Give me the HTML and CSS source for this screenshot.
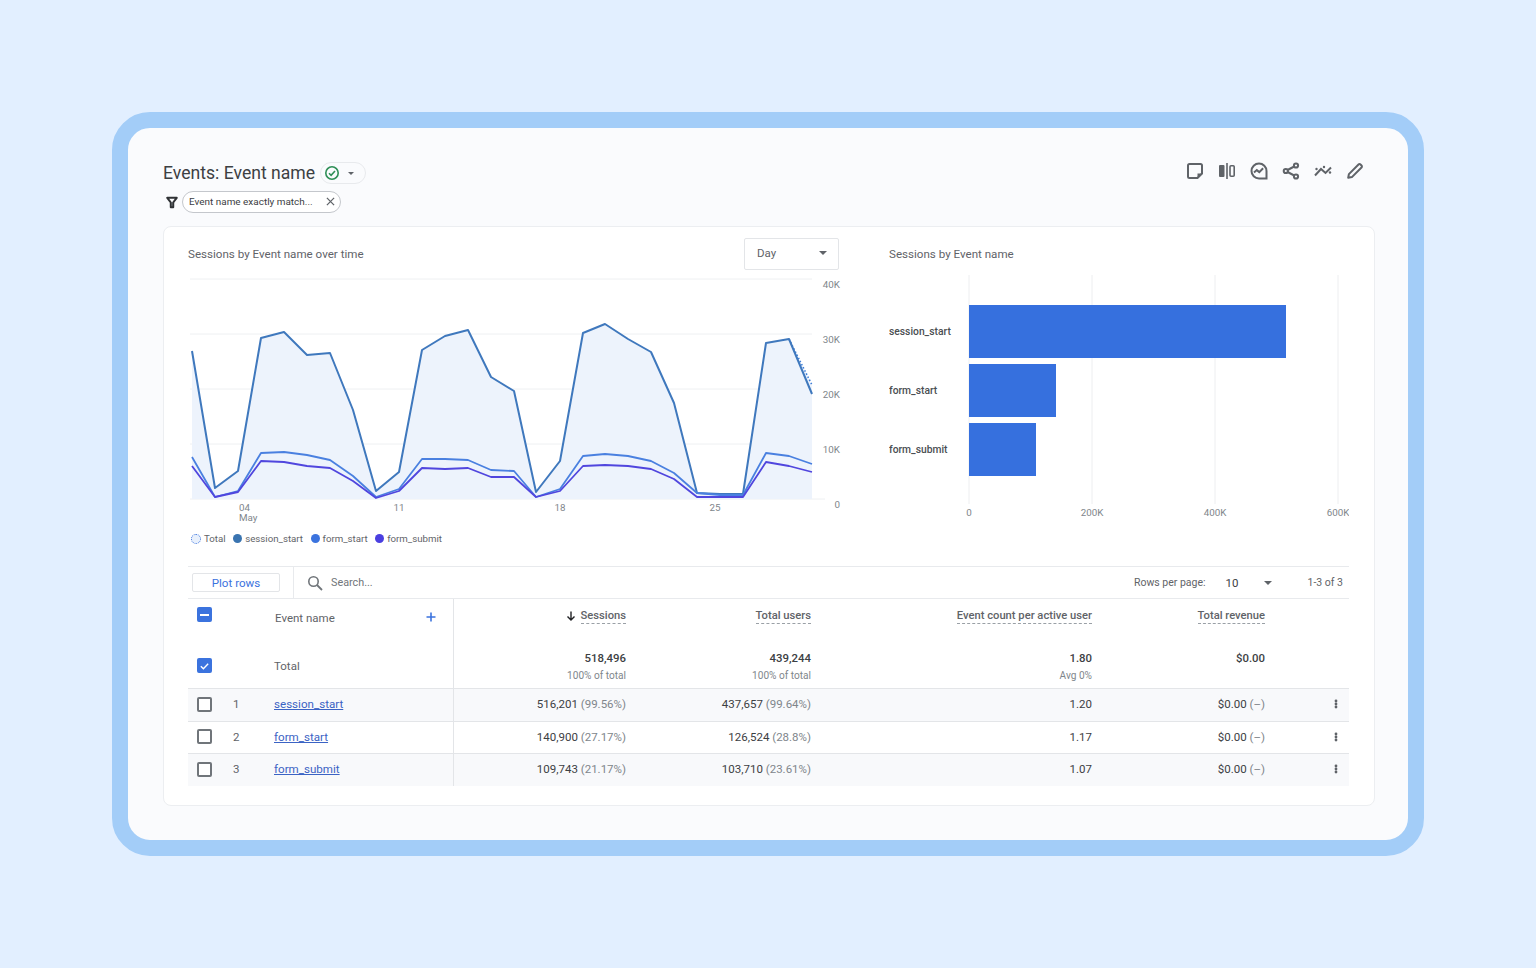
FILE: index.html
```html
<!DOCTYPE html>
<html lang="en">
<head>
<meta charset="utf-8">
<title>Events: Event name</title>
<link rel="stylesheet" href="styles.css">
</head>
<body>
<main class="frame">
  <header class="head">
    <div class="head-left">
      <div class="title-row">
        <h1 class="title">Events: Event name</h1>
        <div class="status">
          <svg class="status-icon" viewBox="0 0 16 16"><circle cx="8" cy="8" r="6.200" fill="none" stroke="#2f8f57" stroke-width="1.600"/><path d="M5 8.200l2.100 2.100L11 6" fill="none" stroke="#2f8f57" stroke-width="1.600"/></svg>
          <span class="caret caret-s"></span>
        </div>
      </div>
      <div class="filter-row">
        <svg class="funnel" viewBox="0 0 14 14"><path d="M1.500 1.500h11L8.400 7v5.500H5.600V7z" fill="none" stroke="#2f3235" stroke-width="2.400" stroke-linejoin="round"/></svg>
        <div class="filter-chip">
          <span>Event name exactly match...</span>
          <svg class="chip-x" viewBox="0 0 10 10"><path d="M1 1l8 8M9 1l-8 8" stroke="#5f6368" stroke-width="1.400" fill="none"/></svg>
        </div>
      </div>
    </div>
    <div class="tools">
      <svg class="tool" viewBox="0 0 18 18"><path d="M3.500 2h11A1.500 1.500 0 0 1 16 3.500V11.500L11.500 16h-8A1.500 1.500 0 0 1 2 14.500v-11A1.500 1.500 0 0 1 3.500 2z" fill="none" stroke="#5f6368" stroke-width="2"/><path d="M11.500 16v-4.500H16z" fill="#5f6368"/></svg>
      <svg class="tool" viewBox="0 0 18 18"><rect x="1" y="3" width="5.500" height="12" rx="1" fill="#5f6368"/><path d="M9 1v16" stroke="#5f6368" stroke-width="1.600"/><rect x="12" y="3.700" width="4.200" height="10.600" rx="1" fill="none" stroke="#5f6368" stroke-width="1.600"/></svg>
      <svg class="tool" viewBox="0 0 18 18"><path d="M9 1.500a7.500 7.500 0 1 0 0 15h7.500V9A7.500 7.500 0 0 0 9 1.500z" fill="none" stroke="#5f6368" stroke-width="2"/><path d="M4 10.500l2.800-2.400 2.500 2 3.800-3.800" fill="none" stroke="#5f6368" stroke-width="2"/></svg>
      <svg class="tool" viewBox="0 0 18 18"><circle cx="14" cy="3.500" r="2.100" fill="none" stroke="#5f6368" stroke-width="2"/><circle cx="3.800" cy="9" r="2.100" fill="none" stroke="#5f6368" stroke-width="2"/><circle cx="14" cy="14.500" r="2.100" fill="none" stroke="#5f6368" stroke-width="2"/><path d="M5.600 8l6.600-3.500M5.600 10l6.600 3.500" stroke="#5f6368" stroke-width="2" fill="none"/></svg>
      <svg class="tool" viewBox="0 0 18 18"><path d="M1 13.500l6-6.500 4.500 4L17 5.500" fill="none" stroke="#5f6368" stroke-width="2"/><circle cx="2.500" cy="7" r="1.200" fill="#5f6368"/><circle cx="10" cy="5" r="1.200" fill="#5f6368"/><circle cx="16" cy="10.500" r="1.200" fill="#5f6368"/></svg>
      <svg class="tool" viewBox="0 0 18 18"><path d="M2.200 15.800l.7-3.700L12.500 2.500a1.400 1.400 0 0 1 2 0l1 1a1.400 1.400 0 0 1 0 2L5.900 15.100z" fill="none" stroke="#5f6368" stroke-width="2" stroke-linejoin="round"/></svg>
    </div>
  </header>

  <section class="card">
    <div class="charts">
      <div class="chart-left">
        <div class="chart-head">
          <h2 class="chart-title">Sessions by Event name over time</h2>
          <div class="day-select"><span>Day</span><span class="caret"></span></div>
        </div>
        <svg class="chart-svg" viewBox="188 275 660 250">
          <g stroke="#eef0f2" stroke-width="1">
            <path d="M190 279H812M190 334H812M190 389H812M190 444H812M190 499H825"/>
          </g>
          <polygon fill="#edf3fc" points="192,351 215,488 238,471 261,338 284,332 307,355 330,353 353,410 376,491 399,472 422,350 445,336 468,330 491,377 514,391 536,492 560,461 583,333 605,324 628,339 651,352 674,403 697,493 720,494 743,494 766,343 789,339 812,385 812,499 192,499"/>
          <polyline fill="none" stroke="#3f7fd8" stroke-width="1.600" stroke-dasharray="1.500 2" points="789,339 812,385"/>
          <polyline fill="none" stroke="#3f78bd" stroke-width="2" stroke-linejoin="round" points="192,351 215,488 238,471 261,338 284,332 307,355 330,353 353,410 376,491 399,472 422,350 445,336 468,330 491,377 514,391 536,492 560,461 583,333 605,324 628,339 651,352 674,403 697,493 720,494 743,494 766,343 789,339 812,394"/>
          <polyline fill="none" stroke="#4a80e0" stroke-width="1.800" stroke-linejoin="round" points="192,457 215,497 238,491 261,453 284,452 307,455 330,460 353,476 376,497 399,489 422,459 445,459 468,460 491,470 514,471 536,497 560,489 583,456 605,454 628,456 651,461 674,473 697,493 720,495 743,495 766,453 789,456 812,464"/>
          <polyline fill="none" stroke="#5046de" stroke-width="1.800" stroke-linejoin="round" points="192,466 215,497 238,492 261,461 284,462 307,466 330,468 353,481 376,498 399,491 422,468 445,469 468,468 491,477 514,477 536,497 560,491 583,466 605,465 628,466 651,469 674,479 697,497 720,497 743,497 766,462 789,466 812,472"/>
          <g class="axis">
            <text x="840" y="288" text-anchor="end">40K</text>
            <text x="840" y="343" text-anchor="end">30K</text>
            <text x="840" y="398" text-anchor="end">20K</text>
            <text x="840" y="453" text-anchor="end">10K</text>
            <text x="840" y="508" text-anchor="end">0</text>
            <text x="239" y="511">04</text>
            <text x="239" y="521">May</text>
            <text x="399" y="511" text-anchor="middle">11</text>
            <text x="560" y="511" text-anchor="middle">18</text>
            <text x="715" y="511" text-anchor="middle">25</text>
          </g>
        </svg>
        <ul class="legend">
          <li class="legend-item"><span class="dot dot-total"></span>Total</li>
          <li class="legend-item"><span class="dot dot-session"></span>session_start</li>
          <li class="legend-item"><span class="dot dot-start"></span>form_start</li>
          <li class="legend-item"><span class="dot dot-submit"></span>form_submit</li>
        </ul>
      </div>
      <div class="chart-right">
        <h2 class="chart-title chart-title-right">Sessions by Event name</h2>
        <svg class="bar-svg" viewBox="889 275 460 250">
          <path d="M969 275V504M1092 275V504M1215 275V504M1338 275V504" stroke="#edeef0" stroke-width="1"/>
          <rect x="969" y="305" width="317" height="53" fill="#3670de"/>
          <rect x="969" y="364" width="87" height="53" fill="#3670de"/>
          <rect x="969" y="423" width="67" height="53" fill="#3670de"/>
          <g class="bar-label">
            <text x="889" y="335">session_start</text>
            <text x="889" y="394">form_start</text>
            <text x="889" y="453">form_submit</text>
          </g>
          <g class="axis" text-anchor="middle">
            <text x="969" y="516">0</text>
            <text x="1092" y="516">200K</text>
            <text x="1215" y="516">400K</text>
            <text x="1338" y="516">600K</text>
          </g>
        </svg>
      </div>
    </div>

    <div class="report">
      <div class="toolbar">
        <button class="plot-btn">Plot rows</button>
        <div class="search">
          <svg class="search-icon" viewBox="0 0 16 16"><circle cx="6.500" cy="6.500" r="4.700" fill="none" stroke="#70757a" stroke-width="1.600"/><path d="M10 10l5 5" stroke="#70757a" stroke-width="1.800"/></svg>
          <span>Search...</span>
        </div>
        <div class="pager">
          <span>Rows per page:</span>
          <span class="pager-num">10</span>
          <span class="caret caret-s"></span>
          <span class="pager-range">1-3 of 3</span>
        </div>
      </div>

      <div class="row row-head">
        <div class="cell cell-check"><span class="box box-blue"><span class="minus"></span></span></div>
        <div class="cell"></div>
        <div class="cell cell-name">Event name<svg class="plus" viewBox="0 0 10 10"><path d="M5 .5v9M.5 5h9" stroke="#3b73de" stroke-width="1.600"/></svg></div>
        <div class="cell cell-num cell-div"><svg class="arrow" viewBox="0 0 10 10"><path d="M5 .5v8.500M1.500 5.500L5 9l3.500-3.500" fill="none" stroke="#202124" stroke-width="1.400"/></svg><span class="metric">Sessions</span></div>
        <div class="cell cell-num"><span class="metric">Total users</span></div>
        <div class="cell cell-num"><span class="metric">Event count per active user</span></div>
        <div class="cell cell-num"><span class="metric">Total revenue</span></div>
        <div class="cell"></div>
      </div>

      <div class="row row-total">
        <div class="cell cell-check"><span class="box box-blue"><svg class="tick" viewBox="0 0 12 12"><path d="M2 6.200l2.800 2.800L10 3.500" fill="none" stroke="#fff" stroke-width="1.500"/></svg></span></div>
        <div class="cell"></div>
        <div class="cell cell-name">Total</div>
        <div class="cell cell-num cell-div"><div class="total"><b>518,496</b><small>100% of total</small></div></div>
        <div class="cell cell-num"><div class="total"><b>439,244</b><small>100% of total</small></div></div>
        <div class="cell cell-num"><div class="total"><b>1.80</b><small>Avg 0%</small></div></div>
        <div class="cell cell-num"><div class="total"><b>$0.00</b></div></div>
        <div class="cell"></div>
      </div>

      <div class="row row-data row-tint">
        <div class="cell cell-check"><span class="box"></span></div>
        <div class="cell cell-idx">1</div>
        <div class="cell cell-name"><a class="link" href="#">session_start</a></div>
        <div class="cell cell-num cell-div">516,201<span class="pct">&nbsp;(99.56%)</span></div>
        <div class="cell cell-num">437,657<span class="pct">&nbsp;(99.64%)</span></div>
        <div class="cell cell-num">1.20</div>
        <div class="cell cell-num">$0.00<span class="pct">&nbsp;(–)</span></div>
        <div class="cell cell-more"><span class="more"><i></i><i></i><i></i></span></div>
      </div>
      <div class="row row-data">
        <div class="cell cell-check"><span class="box"></span></div>
        <div class="cell cell-idx">2</div>
        <div class="cell cell-name"><a class="link" href="#">form_start</a></div>
        <div class="cell cell-num cell-div">140,900<span class="pct">&nbsp;(27.17%)</span></div>
        <div class="cell cell-num">126,524<span class="pct">&nbsp;(28.8%)</span></div>
        <div class="cell cell-num">1.17</div>
        <div class="cell cell-num">$0.00<span class="pct">&nbsp;(–)</span></div>
        <div class="cell cell-more"><span class="more"><i></i><i></i><i></i></span></div>
      </div>
      <div class="row row-data row-tint row-last">
        <div class="cell cell-check"><span class="box"></span></div>
        <div class="cell cell-idx">3</div>
        <div class="cell cell-name"><a class="link" href="#">form_submit</a></div>
        <div class="cell cell-num cell-div">109,743<span class="pct">&nbsp;(21.17%)</span></div>
        <div class="cell cell-num">103,710<span class="pct">&nbsp;(23.61%)</span></div>
        <div class="cell cell-num">1.07</div>
        <div class="cell cell-num">$0.00<span class="pct">&nbsp;(–)</span></div>
        <div class="cell cell-more"><span class="more"><i></i><i></i><i></i></span></div>
      </div>
    </div>
  </section>
</main>
</body>
</html>
```

FILE: styles.css
```css
* { box-sizing: border-box; }
html, body { margin: 0; height: 100%; }
body {
  background: #e2efff;
  font-family: Roboto, "Liberation Sans", sans-serif;
  color: #3c4043;
  padding: 112px;
  overflow: hidden;
}
h1, h2, ul { margin: 0; padding: 0; font-weight: 400; }
ul { list-style: none; }

.frame {
  width: 1312px;
  height: 744px;
  border: 16px solid #a3cdf8;
  border-radius: 38px;
  background: #fafbfd;
  padding: 33px 33px 34px 35px;
  display: flex;
  flex-direction: column;
}

.head { display: flex; justify-content: space-between; align-items: flex-start; height: 65px; }
.title-row { display: flex; align-items: center; height: 24px; gap: 5px; }
.title { font-size: 17.6px; line-height: 24px; color: #3c4043; }
.status {
  width: 46px; height: 22px;
  border: 1px solid #e8eaed; border-radius: 11px;
  display: flex; align-items: center; padding-left: 3px; gap: 8px;
}
.status-icon { width: 16px; height: 16px; }
.caret { width: 0; height: 0; border-left: 4px solid transparent; border-right: 4px solid transparent; border-top: 4px solid #5f6368; }
.status .caret { border-left-width: 3.500px; border-right-width: 3.500px; border-top-width: 3.500px; }

.filter-row { display: flex; align-items: center; margin-top: 6px; margin-left: 3px; gap: 4px; }
.funnel { width: 12px; height: 13px; }
.filter-chip {
  width: 159px; height: 22px;
  border: 1px solid #c4c7cc; border-radius: 11px; background: #fff;
  display: flex; align-items: center; justify-content: space-between;
  padding: 0 5px 1px 6px;
  font-size: 9.950px; color: #3c4043;
  white-space: nowrap;
}
.chip-x { width: 9px; height: 9px; }

.tools { display: flex; gap: 14px; padding: 1px 11px 0 0; }
.tool { width: 18px; height: 18px; display: block; }

.card {
  flex: 1;
  background: #fff;
  border: 1px solid #eceef1;
  border-radius: 8px;
  padding: 11px 25px 0 24px;
}
.charts { display: grid; grid-template-columns: 660px 1fr; column-gap: 41px; }
.chart-head { display: flex; justify-content: space-between; align-items: flex-start; height: 31px; margin-bottom: 6px; padding-right: 9px; }
.chart-title { font-size: 11.600px; line-height: 33px; color: #5f6368; }
.chart-head .chart-title { height: 31px; }
.chart-title-right { height: 31px; margin-bottom: 6px; }
.day-select {
  width: 95px; height: 32px;
  border: 1px solid #e3e5e8; border-radius: 2px;
  display: flex; align-items: center; justify-content: space-between;
  padding: 0 11px 2px 12px;
  font-size: 11.500px; color: #5f6368;
}
.chart-svg, .bar-svg { display: block; width: 660px; height: 250px; }
.bar-svg { width: 460px; }
.axis { font-size: 9.800px; fill: #80868b; font-family: Roboto, "Liberation Sans", sans-serif; }
.bar-label { font-size: 10.300px; font-weight: 500; fill: #4a4e52; font-family: Roboto, "Liberation Sans", sans-serif; }

.legend { display: flex; align-items: center; height: 13px; margin: 7px 0 1px 3px; font-size: 9.700px; color: #5f6368; gap: 7.500px; }
.legend-item { display: flex; align-items: center; gap: 3px; }
.dot { width: 9px; height: 9px; border-radius: 50%; display: block; }
.dot-total { width: 10px; height: 10px; background: #e8f0fc; border: 1.500px dotted #3b73de; }
.dot-session { background: #3a74b0; }
.dot-start { background: #3b73de; }
.dot-submit { background: #4a3fe0; }

.report { margin-top: 20px; }
.toolbar {
  display: flex; align-items: center;
  height: 33px;
  border-top: 1px solid #e8eaed; border-bottom: 1px solid #e8eaed;
  padding: 0 6px 0 4px;
  font-size: 10.500px; color: #5f6368;
}
.plot-btn {
  width: 88px; height: 19px; padding: 0;
  background: #fff; border: 1px solid #e3e5e8; border-radius: 2px;
  color: #3b73de; font: 400 11.600px Roboto, "Liberation Sans", sans-serif;
}
.search {
  display: flex; align-items: center; gap: 8px;
  height: 32px; margin-left: 13px; padding-left: 13px;
  border-left: 1px solid #e8eaed;
  font-size: 10.800px; color: #70757a;
}
.search-icon { width: 16px; height: 16px; }
.pager { display: flex; align-items: center; margin-left: auto; }
.pager-num { margin-left: 20px; width: 38px; font-size: 11.500px; line-height: 12px; color: #3c4043; }
.pager-range { margin-left: 36px; }

.row {
  display: grid;
  grid-template-columns: 45px 41px 179px 173px 185px 281px 173px 84px;
  font-size: 11.500px;
  color: #5f6368;
}
.row-head { height: 42px; }
.row-total { height: 48px; border-bottom: 1px solid #e3e5e8; }
.row-data { height: 32.500px; border-bottom: 1px solid #e3e5e8; }
.row-last { height: 31.500px; border-bottom: 0; }
.row-tint { background: #f8f9fb; }

.cell { display: flex; align-items: center; min-width: 0; }
.row-data .cell { padding-bottom: 1px; }
.cell-check { padding-left: 9px; }
.cell-idx { color: #5f6368; }
.cell-name { justify-content: space-between; padding-right: 17px; }
.row-head .cell-name { padding-left: 1px; }
.cell-num { justify-content: flex-end; color: #3c4043; }
.cell-div { border-left: 1px solid #e3e5e8; }
.cell-more { justify-content: flex-end; padding-right: 12px; }

.row-head .cell { align-items: flex-start; padding-top: 9px; }
.row-head .cell-name { padding-top: 12px; }
.row-head .cell-check { padding-top: 8px; }
.row-total .cell-check, .row-total .cell-name { padding-top: 2px; }
.row-total .cell-num { align-items: flex-start; padding-top: 10px; }

.metric { border-bottom: 1px dashed #9aa0a6; line-height: 15px; font-size: 11.200px; color: #5f6368; font-weight: 500; }
.arrow { width: 10px; height: 10px; margin: 3px 5px 0 0; }
.plus { width: 10px; height: 10px; margin-top: 1px; }
.total { display: flex; flex-direction: column; align-items: flex-end; }
.total b { font-weight: 500; font-size: 11.400px; line-height: 14px; color: #3c4043; }
.total small { font-size: 10.100px; line-height: 14px; margin-top: 4px; color: #80868b; }
.pct { color: #80868b; }
.link { color: #3b63c4; font-size: 11.600px; }

.box { width: 15px; height: 15px; border: 2px solid #70757a; border-radius: 2px; display: flex; align-items: center; justify-content: center; background: #fff; }
.box-blue { background: #3b73de; border-color: #3b73de; }
.minus { width: 9px; height: 2px; background: #fff; }
.tick { width: 12px; height: 12px; }

.more { display: flex; flex-direction: column; gap: 1px; }
.more i { width: 2px; height: 2px; border-radius: 50%; background: #5f6368; display: block; box-shadow: 0 0 0 .4px #5f6368; }
```
